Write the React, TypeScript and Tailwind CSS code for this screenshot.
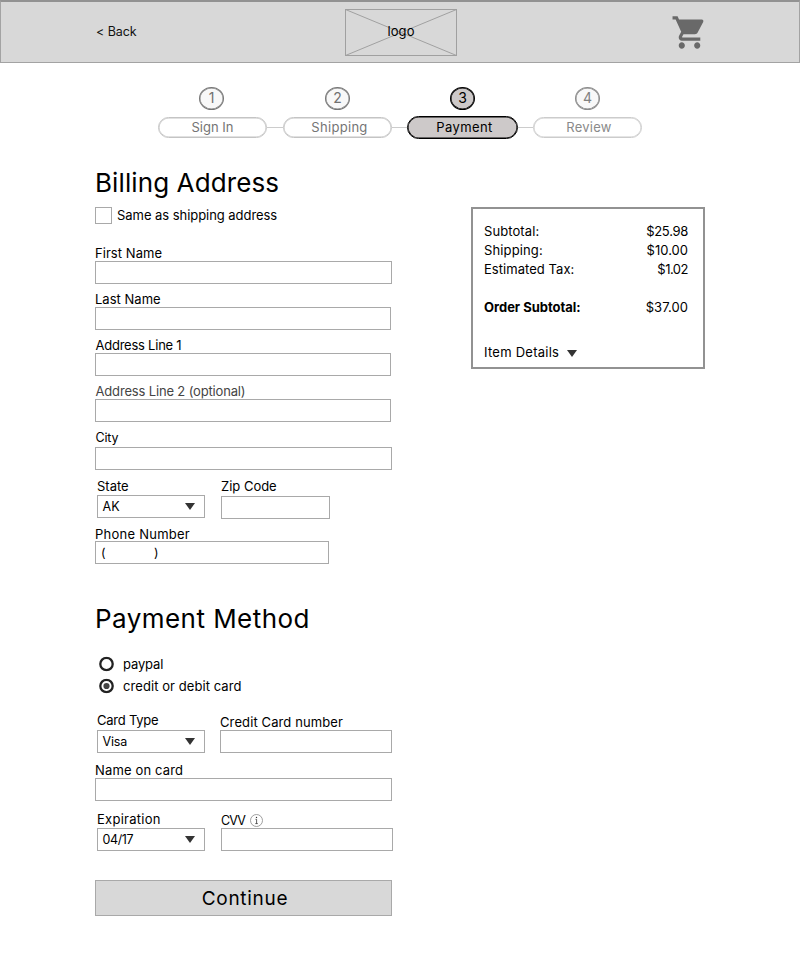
import type { ReactNode } from "react";

function Caret({ className = "" }: { className?: string }) {
  return (
    <svg viewBox="0 0 10 7" className={`h-[7px] w-[10px] shrink-0 ${className}`} preserveAspectRatio="none">
      <path d="M0 0H10L5 7Z" fill="#333" />
    </svg>
  );
}

function Label({ className = "", children }: { className?: string; children: ReactNode }) {
  return <div className={`h-[15px] whitespace-nowrap pl-px leading-[15px] ${className}`}>{children}</div>;
}

function Box({ className = "w-[297px]", children }: { className?: string; children?: ReactNode }) {
  return (
    <div className={`flex h-[23px] items-center border border-[#a9a9a9] bg-white ${className}`}>{children}</div>
  );
}

function Select({ value, className = "" }: { value: string; className?: string }) {
  return (
    <Box className={`w-[108px] justify-between pr-[9px] pl-[4.5px] text-[12.5px] ${className}`}>
      <span className="leading-[15px]">{value}</span>
      <Caret />
    </Box>
  );
}

function Step({ n, label, labelClass, active = false, light = false, circleClass = "" }: {
  n: string;
  label: string;
  labelClass: string;
  active?: boolean;
  light?: boolean;
  circleClass?: string;
}) {
  const circle = active
    ? "border-black bg-[#cdc9c9] text-black"
    : light
      ? "border-[#8a8a8a] bg-[#f8f8f8] text-[#808080]"
      : "border-[#757575] bg-[#f8f8f8] text-[#707070]";
  const pill = active
    ? "h-[23px] w-[111px] border-[1.5px] border-black bg-[#cdc9c9] text-black shadow-[inset_0_0_0_0.6px_#000]"
    : light
      ? "my-px h-[21px] w-[109px] border border-[#ccc] text-[#8a8a8a] shadow-[inset_0_0_0_0.5px_#ccc]"
      : "my-px h-[21px] w-[109px] border border-[#c4c4c4] text-[#757575] shadow-[inset_0_0_0_0.5px_#c4c4c4]";
  return (
    <div className="flex flex-col items-center">
      <div className={`mb-[6px] flex h-[23px] w-[25px] items-center justify-center rounded-[50%] border text-[14px] leading-none ${active ? "shadow-[inset_0_0_0_0.6px_#000]" : "shadow-[inset_0_0_0_0.5px_#808080]"} ${circle} ${circleClass}`}>
        {n}
      </div>
      <div className={`flex items-center justify-center rounded-full leading-[15px] ${pill} ${labelClass}`}>{label}</div>
    </div>
  );
}

function Connector({ className = "w-4" }: { className?: string }) {
  return <div className={`mt-[40px] h-px bg-[#ccc] ${className}`} />;
}

function Total({ label, value, labelClass, valueClass, className = "" }: {
  label: string;
  value: string;
  labelClass: string;
  valueClass: string;
  className?: string;
}) {
  return (
    <div className={`flex h-[15px] justify-between leading-[15px] ${className}`}>
      <span className={labelClass}>{label}</span>
      <span className={valueClass}>{value}</span>
    </div>
  );
}

function Radio({ checked = false }: { checked?: boolean }) {
  return (
    <svg viewBox="0 0 15 15" className="size-[15px] -translate-y-[0.5px]" fill="none">
      <circle cx="7.500" cy="7.500" r="6.200" stroke="#222" strokeWidth="2.300" />
      {checked && <circle cx="7.500" cy="7.500" r="3.100" fill="#444" />}
    </svg>
  );
}

export default function App() {
  return (
    <div className="h-[975px] w-[800px] overflow-hidden bg-white font-[Inter,sans-serif] text-[13px] text-black">
      <header className="flex h-[63.4px] items-start border border-t-2 border-[#a3a3a3] border-t-[#929292] bg-[#d8d8d8]">
        <div className="mt-[22px] ml-[95px] w-[249px] text-[12.5px] leading-[15px] tracking-[-0.08px] text-[#111]">&lt; Back</div>
        <div className="mt-[7px] grid h-[47px] w-[112px] place-items-center">
          <svg viewBox="0 0 112 47" className="col-start-1 row-start-1 h-[47px] w-[112px]" fill="none" stroke="#a0a0a0">
            <rect x=".5" y=".5" width="111" height="46" />
            <path d="M.5 .5 111.5 46.5M.5 46.5 111.5 .5" />
          </svg>
          <span className="col-start-1 row-start-1 -mt-[2px] leading-[15px] tracking-[0.1px]">logo</span>
        </div>
        <svg viewBox="0 0 24 24" preserveAspectRatio="none" className="mt-[11px] ml-[214px] h-[39px] w-[37px]" fill="#696969">
          <path d="M7 18c-1.100 0-1.990.900-1.990 2S5.900 22 7 22s2-.900 2-2-.900-2-2-2zM1 2v2h2l3.600 7.590-1.350 2.450c-.160.280-.250.610-.250.960 0 1.100.900 2 2 2h12v-2H7.420c-.140 0-.250-.110-.250-.250l.030-.120.900-1.630h7.450c.750 0 1.410-.410 1.750-1.030l3.580-6.490A1.003 1.003 0 0 0 20 4H5.210l-.940-2H1zm16 16c-1.100 0-1.990.900-1.990 2s.890 2 1.990 2 2-.900 2-2-.900-2-2-2z" />
        </svg>
      </header>

      <nav className="ml-[158px] flex pt-[23.6px]">
        <Step n="1" label="Sign In" labelClass="tracking-[0.02px]" circleClass="-translate-x-px" />
        <Connector />
        <Step n="2" label="Shipping" labelClass="tracking-[0.3px] pl-1" />
        <Connector className="w-[15px]" />
        <Step n="3" label="Payment" labelClass="tracking-[0.42px] pl-[4px]" active />
        <Connector className="w-[15px]" />
        <Step n="4" label="Review" labelClass="tracking-[0.27px] pl-[3px]" light />
      </nav>

      <main className="flex pl-[95px]">
        <form className="w-[376px] pt-[29px]">
          <h1 className="h-[30px] text-[26px] leading-[30px] tracking-[0.1px]">Billing Address</h1>
          <div className="mt-[9px] flex h-[17px] items-center">
            <span className="size-[17px] border border-[#a9a9a9]" />
            <span className="ml-[5px] leading-[15px] tracking-[-0.05px]">Same as shipping address</span>
          </div>

          <Label className="mt-[22px] -ml-px tracking-[0.05px]">First Name</Label>
          <Box />
          <Label className="mt-2 -ml-px tracking-[0.02px]">Last Name</Label>
          <Box className="w-[296px]" />
          <Label className="mt-2 -ml-[0.5px] tracking-[-0.24px]">Address Line 1</Label>
          <Box className="w-[296px]" />
          <Label className="mt-2 -ml-[0.5px] tracking-[-0.16px] text-[#444]">Address Line 2 (optional)</Label>
          <Box className="w-[296px]" />
          <Label className="mt-2 -ml-[0.5px] text-[12.5px] tracking-[-0.16px]">City</Label>
          <Box className="mt-[2px] w-[297px]" />

          <div className="mt-[9px] flex gap-4 pl-[2px]">
            <div>
              <Label className="-ml-px tracking-[0.01px]">State</Label>
              <Select value="AK" className="mt-px tracking-[0.08px]" />
            </div>
            <div>
              <Label className="-ml-px tracking-[-0.01px]">Zip Code</Label>
              <Box className="mt-[2px] w-[109px]" />
            </div>
          </div>

          <Label className="mt-2 -mb-px -ml-px tracking-[0.25px]">Phone Number</Label>
          <Box className="w-[234px] pt-[2px] pl-[5px] text-[12.5px]">
            <span className="w-[53px]">(</span>
            <span>)</span>
          </Box>

          <h1 className="mt-[40px] h-[30px] text-[26px] leading-[30px] tracking-[0.45px]">Payment Method</h1>
          <div className="mt-[20px] ml-[4px] flex h-[22px] items-center gap-[9px]">
            <Radio />
            <span className="leading-[15px] tracking-[-0.15px]">paypal</span>
          </div>
          <div className="ml-[4px] flex h-[22px] items-center gap-[9px]">
            <Radio checked />
            <span className="leading-[15px] tracking-[0.07px]">credit or debit card</span>
          </div>

          <div className="mt-[15px] flex pl-[2px]">
            <div className="w-[123px]">
              <Label className="-ml-px tracking-[-0.24px]">Card Type</Label>
              <Select value="Visa" className="mt-[2px] tracking-[-0.18px]" />
            </div>
            <div>
              <Label className="mt-[2px] -ml-px tracking-[0.11px]">Credit Card number</Label>
              <Box className="w-[172px]" />
            </div>
          </div>

          <Label className="mt-[10px] -ml-px tracking-[0.15px]">Name on card</Label>
          <Box />

          <div className="mt-[11px] flex gap-4 pl-[2px]">
            <div>
              <Label className="-ml-px tracking-[0.26px]">Expiration</Label>
              <Select value="04/17" className="mt-px tracking-[-0.39px]" />
            </div>
            <div>
              <Label className="mt-px -ml-px flex items-center">
                <span className="w-[28px] text-[12.5px] tracking-[-0.8px]">CVV</span>
                <svg viewBox="0 0 13 13" className="ml-px size-[13px]" fill="none" stroke="#888" strokeWidth=".8">
                  <circle cx="6.500" cy="6.500" r="6" />
                  <path d="M5.500 5.300H6.600V9.600M5.300 9.600H7.800" stroke="#333" />
                  <circle cx="6.500" cy="3.400" r=".7" fill="#333" stroke="none" />
                </svg>
              </Label>
              <Box className="w-[172px]" />
            </div>
          </div>

          <button type="button" className="mt-[29px] flex h-[36px] w-[297px] items-center justify-center border border-[#a9a9a9] bg-[#d8d8d8] pt-[3px] pl-[3px] text-[19px] tracking-[0.7px]">
            Continue
          </button>
        </form>

        <aside className="mt-[68px] h-[162px] w-[234px] border-2 border-[#929292] pt-[15px] pr-[15px] pl-[11px]">
          <Total label="Subtotal:" value="$25.98" labelClass="tracking-[0.09px]" valueClass="tracking-[-0.3px]" />
          <Total label="Shipping:" value="$10.00" className="mt-1" labelClass="tracking-[0.13px]" valueClass="tracking-[0.01px]" />
          <Total label="Estimated Tax:" value="$1.02" className="mt-1" labelClass="tracking-[0.05px]" valueClass="tracking-[-0.5px]" />
          <Total label="Order Subtotal:" value="$37.00" className="mt-[23px]" labelClass="font-bold tracking-[-0.02px]" valueClass="tracking-[0.06px]" />
          <div className="mt-[30px] flex h-[15px] items-center leading-[15px]">
            <span className="mr-2 tracking-[0.25px]">Item Details</span>
            <Caret className="mt-[2px]" />
          </div>
        </aside>
      </main>
    </div>
  );
}
